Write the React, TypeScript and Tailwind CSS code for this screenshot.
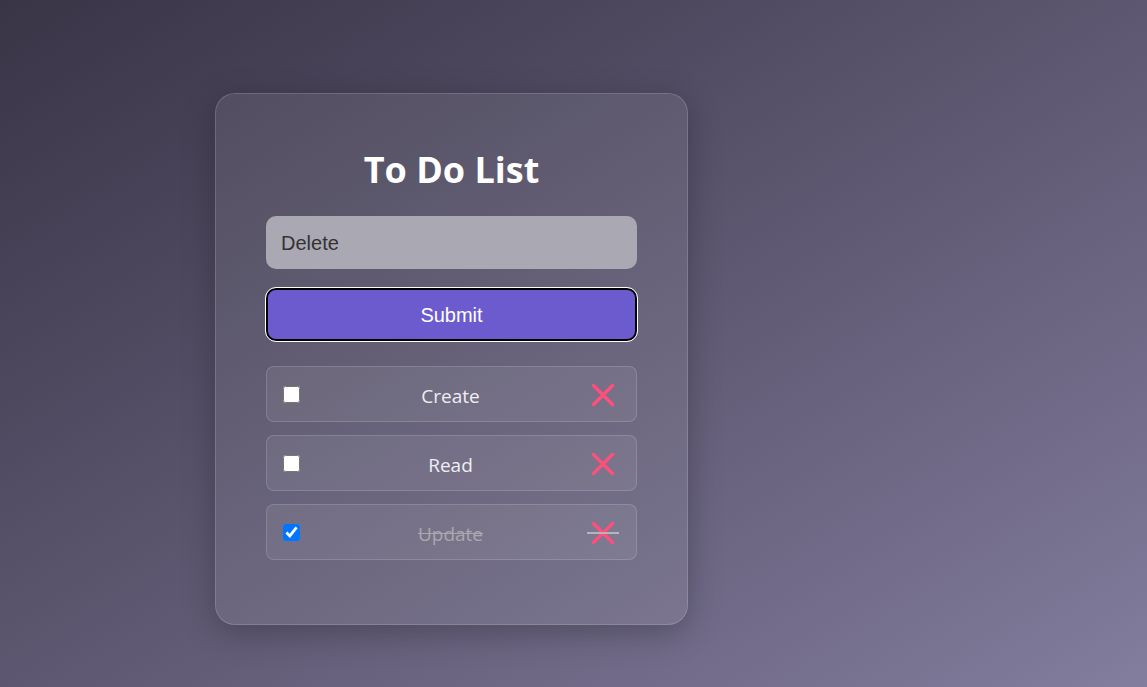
import React from "react";

const items = [
  { text: "Create", done: false },
  { text: "Read", done: false },
  { text: "Update", done: true },
];

function XIcon() {
  return (
    <svg width="26" height="26" viewBox="0 0 26 26" fill="none">
      <path d="M3.5 3.5 L22.5 22.5 M22.5 3.5 L3.5 22.5" stroke="#ff4f7b" strokeWidth="3.4" strokeLinecap="round" />
    </svg>
  );
}

export default function App() {
  return (
    <div className="min-h-[687px] w-full bg-linear-to-br from-[#393446] to-[#837d9e] pl-[215px] pt-[93px] font-['Open_Sans',sans-serif]">
      <div className="w-[473px] h-[532px] rounded-[20px] border border-white/15 bg-white/[0.08] shadow-[0_8px_32px_rgba(0,0,0,0.25)] px-[50px] pt-[51px]">
        <h1 className="text-center text-[36px] font-bold text-white leading-[50px]">To Do List</h1>
        <div className="mt-[21px] h-[53px] rounded-[10px] bg-[#aaa8b3] flex items-center px-[15px] font-['Liberation_Sans',Arial,sans-serif] text-[20px] text-[#333]">
          Delete
        </div>
        <button className="mt-[19px] w-full h-[53px] rounded-[10px] border-2 border-black outline outline-1 outline-white bg-[#6c5bcf] text-white text-[20px] font-['Liberation_Sans',Arial,sans-serif]">
          Submit
        </button>
        <div className="mt-[25px] flex flex-col gap-[13px]">
          {items.map((it) => (
            <div
              key={it.text}
              className="h-[56px] rounded-[8px] border border-white/15 bg-white/[0.07] grid grid-cols-[50px_1fr_50px] items-center pl-[16px] pr-[18px]"
            >
              <input
                type="checkbox"
                defaultChecked={it.done}
                className="w-[17px] h-[17px] m-0 accent-[#0075ff]"
              />
              <span
                className={
                  "text-center text-[19px] translate-y-[2px] " +
                  (it.done ? "line-through text-[#a9a8ae]" : "text-[#eeeef2]")
                }
              >
                {it.text}
              </span>
              <span className="relative flex items-center justify-end h-[30px] translate-y-[1px]">
                <span className="relative flex items-center justify-center w-[30px] h-[30px]">
                  <XIcon />
                  {it.done && (
                    <span className="absolute left-[-1px] right-[-1px] top-[14px] h-[2px] bg-[#b5b4ba]" />
                  )}
                </span>
              </span>
            </div>
          ))}
        </div>
      </div>
    </div>
  );
}
